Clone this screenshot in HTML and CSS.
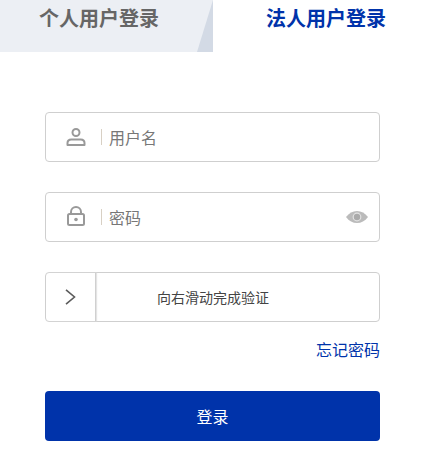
FILE: index.html
```
<!DOCTYPE html>
<html lang="zh-CN">
<head>
<meta charset="utf-8">
<title>登录</title>
<link rel="stylesheet" href="styles.css">
</head>
<body>
<div class="tabs">
  <div class="tab tab-off"><span>个人用户登录</span></div>
  <div class="tab tab-on"><span>法人用户登录</span></div>
</div>
<form class="form">
  <div class="field">
    <svg class="icon" width="20" height="18" viewBox="0 0 20 18"><circle cx="10" cy="4.500" r="3.500" fill="none" stroke="#999" stroke-width="2"/><path d="M1.500 17v-2c0-2.200 1.600-3.500 3.800-3.500h9.400c2.200 0 3.800 1.300 3.800 3.500v2z" fill="none" stroke="#999" stroke-width="2" stroke-linejoin="round"/></svg>
    <i class="sep"></i>
    <span class="ph">用户名</span>
  </div>
  <div class="field">
    <svg class="icon icon-lock" width="20" height="20" viewBox="0 0 20 20"><path d="M5 8V6a5 5 0 0 1 10 0v2" fill="none" stroke="#999" stroke-width="2"/><rect x="2" y="8" width="16" height="11" rx="1.500" fill="none" stroke="#999" stroke-width="2"/><circle cx="10" cy="13.500" r="1.800" fill="#999"/></svg>
    <i class="sep"></i>
    <span class="ph">密码</span>
    <svg class="eye" width="22" height="12" viewBox="0 0 22 12"><path d="M0 6C3 2 6.800 0 11 0s8 2 11 6c-3 4-6.800 6-11 6S3 10 0 6z" fill="#bbb"/><circle cx="11" cy="6" r="4.400" fill="#e2e2e2"/><circle cx="11" cy="6" r="3.200" fill="#aaa"/></svg>
  </div>
  <div class="slider">
    <div class="handle"><svg width="11" height="16" viewBox="0 0 11 16"><path d="M1 .8 9.500 8 1 15.200" fill="none" stroke="#5c5c5c" stroke-width="1.600"/></svg></div>
    <div class="slide-text">向右滑动完成验证</div>
  </div>
  <div class="links"><a class="forgot">忘记密码</a></div>
  <button class="submit" type="button">登录</button>
</form>
</body>
</html>
```
FILE: styles.css
```
* { box-sizing: border-box; }
html, body { margin: 0; padding: 0; background: #fff; }
body {
  width: 421px;
  height: 450px;
  overflow: hidden;
  font-family: "Noto Sans CJK SC", "Liberation Sans", sans-serif;
}
.tabs { display: flex; height: 52px; }
.tab { font-size: 20px; font-weight: 700; line-height: 36px; }
.tab-off {
  width: 213px;
  padding-left: 39px;
  color: #666;
  background: #eceff4;
  position: relative;
}
.tab-off::after {
  content: "";
  position: absolute;
  right: 0;
  top: 0;
  width: 16px;
  height: 52px;
  background: #d3dae5;
  clip-path: polygon(100% 0, 100% 100%, 0 100%);
}
.tab-on { flex: 1; padding-left: 53px; color: #0033aa; }
.form { width: 335px; margin: 60px 0 0 45px; }
.field {
  display: flex;
  align-items: center;
  height: 50px;
  margin-bottom: 30px;
  padding-left: 20px;
  border: 1px solid #cfcfcf;
  border-radius: 4px;
}
.icon { flex: none; }
.icon-lock { margin-top: -2px; }
.sep { flex: none; width: 1px; height: 16px; margin: 0 7px 0 15px; background: #d8d0c4; }
.ph { font-size: 16px; color: #777; line-height: 22px; }
.eye { margin-left: auto; margin-right: 11px; }
.slider {
  display: flex;
  height: 50px;
  border: 1px solid #cfcfcf;
  border-radius: 4px;
}
.handle {
  flex: none;
  width: 50px;
  display: flex;
  align-items: center;
  justify-content: center;
  padding-right: 1px;
  border-right: 1px solid #d0d0d0;
  box-shadow: 1px 0 1px #e4e4e4;
}
.slide-text {
  flex: 1;
  padding-left: 61px;
  font-size: 14px;
  line-height: 48px;
  color: #444;
}
.links { display: flex; justify-content: flex-end; height: 69px; padding-top: 16px; }
.forgot { font-size: 16px; line-height: 22px; color: #0033aa; }
.submit {
  display: block;
  width: 335px;
  height: 50px;
  border: 0;
  border-radius: 4px;
  background: #0033aa;
  color: #fff;
  font-family: inherit;
  font-size: 16px;
}
```
